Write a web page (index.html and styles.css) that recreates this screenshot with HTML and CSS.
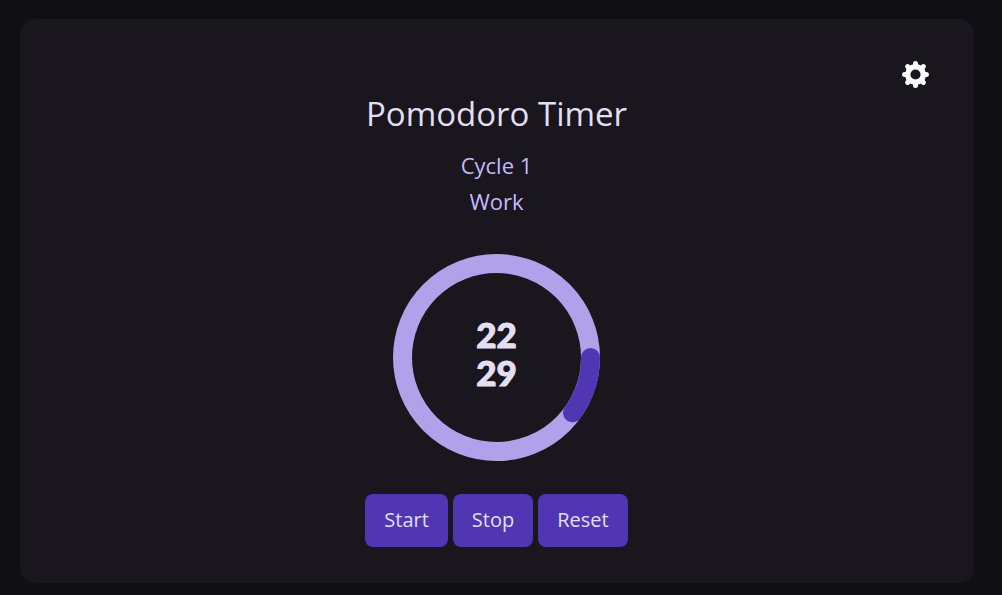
FILE: index.html
```html
<!DOCTYPE html>
<html lang="en">
<head>
<meta charset="utf-8">
<meta name="viewport" content="width=device-width, initial-scale=1">
<title>Pomodoro Timer</title>
<link rel="stylesheet" href="styles.css">
</head>
<body>
<main class="card">
  <header class="toolbar">
    <button class="settings" type="button" aria-label="Settings">
      <svg class="gear" viewBox="0 0 28 28" fill="none" stroke="currentColor" aria-hidden="true">
        <circle cx="14.5" cy="14.5" r="7.8" stroke-width="5.4"/>
        <path stroke-width="5" stroke-linecap="round" d="M14.5 5.5V3.6M14.5 23.5v1.9M5.5 14.5H3.6M23.5 14.5h1.9M8 8 6.6 6.6M21 8l1.4-1.4M8 21l-1.4 1.4M21 21l1.4 1.4"/>
      </svg>
    </button>
  </header>
  <h1 class="title">Pomodoro Timer</h1>
  <p class="status">Cycle 1</p>
  <p class="status">Work</p>
  <div class="dial">
    <svg class="ring" viewBox="0 0 207 207" fill="none" aria-hidden="true">
      <circle class="track" cx="103.5" cy="103.5" r="94"/>
      <path class="progress" d="M197.5 103.5A94 94 0 0 1 179.5 158.8"/>
    </svg>
    <div class="time"><span>22</span><span>29</span></div>
  </div>
  <div class="actions">
    <button class="action" type="button">Start</button>
    <button class="action" type="button">Stop</button>
    <button class="action" type="button">Reset</button>
  </div>
</main>
</body>
</html>
```
FILE: styles.css
```css
* {
  box-sizing: border-box;
}

body {
  margin: 0;
  padding: 19px 28px 12px 20px;
  background: #100f14;
  color: #e3dff2;
  font-family: "Open Sans", "Noto Sans", sans-serif;
}

.card {
  display: flex;
  flex-direction: column;
  align-items: center;
  padding: 41px 45px 36px 44px;
  border-radius: 15px;
  background: #19161e;
}

.toolbar {
  display: flex;
  justify-content: flex-end;
  width: 100%;
}

.settings {
  display: flex;
  padding: 0;
  border: 0;
  background: none;
  color: #fff;
  cursor: pointer;
}

.gear {
  width: 28px;
  height: 28px;
  overflow: visible;
}

.title {
  margin: 0 0 7px;
  font-size: 33px;
  font-weight: 400;
  line-height: 52px;
}

.status {
  margin: 0;
  color: #c5b8ff;
  font-size: 22px;
  line-height: 36px;
}

.dial {
  display: grid;
  place-items: center;
  margin: 35px 0 33px;
}

.ring,
.time {
  grid-area: 1 / 1;
}

.ring {
  width: 207px;
  height: 207px;
}

.track,
.progress {
  stroke: #b1a1ea;
  stroke-width: 19;
}

.progress {
  stroke: #5036b3;
  stroke-linecap: round;
}

.time {
  display: flex;
  flex-direction: column;
  align-items: center;
  padding-bottom: 10px;
  font-family: Lato, sans-serif;
  font-size: 35px;
  font-weight: 900;
  line-height: 38px;
  -webkit-text-stroke: 1px currentColor;
}

.actions {
  display: flex;
  gap: 5px;
}

.action {
  padding: 12px 19px 13px;
  border: 0;
  border-radius: 8px;
  background: #5036b3;
  color: #e3dff2;
  font-family: inherit;
  font-size: 20px;
  font-weight: 500;
  line-height: 28px;
  cursor: pointer;
}
```
